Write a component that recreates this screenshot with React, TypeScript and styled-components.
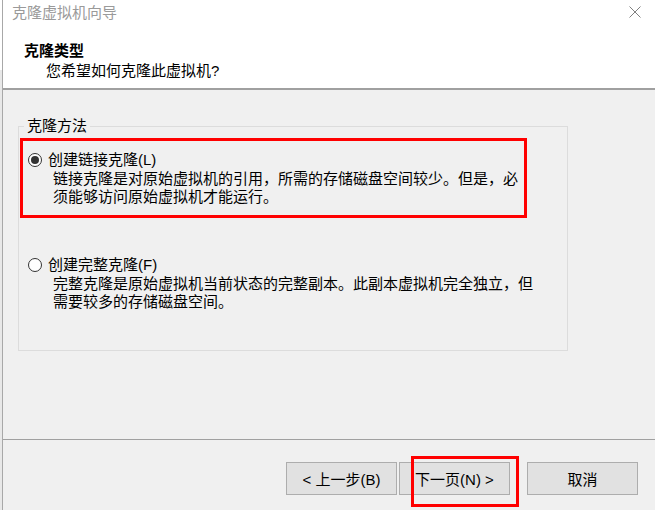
import styled, { createGlobalStyle } from "styled-components"

const GlobalStyle = createGlobalStyle`
html, body {
  margin: 0;
  padding: 0;
  background: #f0f0f0;
}
body {
  font-family: "Liberation Sans", "Noto Sans CJK SC", sans-serif;
  font-size: 15px;
  color: #000;
}
`

const Screen = styled.div`
display: flex;
width: 655px;
height: 510px;
overflow: hidden;
`

const BackStrip = styled.div`
width: 2px;
background: linear-gradient(#fff 0 70px, #e8e8e8 70px);
`

const Window = styled.div`
flex: 1;
display: flex;
flex-direction: column;
border-left: 1px solid #a8a8a8;
background: #f0f0f0;
`

const Header = styled.div`
height: 88px;
background: #fff;
border-bottom: 2px solid #a0a0a0;
`

const TitleBar = styled.div`
height: 30px;
display: flex;
align-items: center;
justify-content: space-between;
padding: 0 14px 0 9px;
`

const Title = styled.span`
color: #9a9a9a;
font-size: 15px;
line-height: 20px;
margin-top: -4px;
`

const CloseIcon = () => (
  <svg width="12" height="12" viewBox="0 0 12 12" style={{ marginTop: -6 }}>
    <path d="M0.5 0.5 L11.5 11.5 M11.5 0.5 L0.5 11.5" stroke="#808080" strokeWidth="1" fill="none" />
  </svg>
)

const HeaderText = styled.div`
padding: 11px 0 0 21px;
line-height: 20px;
`

const Heading = styled.div`
font-weight: bold;
`

const Subtitle = styled.div`
padding-left: 22px;
`

const Body = styled.div`
height: 349px;
padding: 27px 0 0 15px;
box-sizing: border-box;
`

const Group = styled.fieldset`
width: 550px;
box-sizing: border-box;
margin: 0;
padding: 3px 0 39px 0;
border: 1px solid #dcdcdc;
`

const Legend = styled.legend`
margin-left: 5px;
padding: 0 3px;
line-height: 18px;
`

const Highlight = styled.div`
width: 507px;
box-sizing: border-box;
margin-left: 1px;
border: 3px solid #ff0000;
padding: 10px 0 9px 5px;
`

const Option = styled.div<{ $gap?: number; $indent?: number }>`
margin-top: ${props => props.$gap ?? 0}px;
padding-left: ${props => props.$indent ?? 0}px;
`

const OptionRow = styled.label`
display: flex;
align-items: center;
gap: 6px;
line-height: 18px;
`

const Radio = styled.span<{ $checked?: boolean }>`
width: 14px;
height: 14px;
box-sizing: border-box;
border-radius: 50%;
border: 1px solid #333;
background: #fff;
display: flex;
align-items: center;
justify-content: center;

&::after {
  content: "";
  width: 8px;
  height: 8px;
  border-radius: 50%;
  background: ${props => props.$checked ? "#333" : "transparent"};
}
`

const Desc = styled.div`
padding-left: 25px;
margin-top: 1px;
line-height: 18px;
`

const Footer = styled.div`
flex: 1;
position: relative;
border-top: 1px solid #a0a0a0;
display: flex;
justify-content: flex-end;
align-items: flex-start;
padding: 22px 17px 0 0;
`

const Button = styled.button<{ $width: number; $gap?: number }>`
width: ${props => props.$width}px;
height: 33px;
margin-left: ${props => props.$gap ?? 0}px;
background: #e1e1e1;
border: 1px solid #adadad;
font-family: inherit;
font-size: 15px;
color: #000;
padding: 0;
`

const Callout = styled.div`
position: absolute;
left: 408px;
top: 16px;
width: 108px;
height: 51px;
box-sizing: border-box;
border: 3px solid #ff0000;
pointer-events: none;
`

export default function App() {
  return <>
    <GlobalStyle />
    <Screen>
      <BackStrip />
      <Window>
        <Header>
          <TitleBar>
            <Title>克隆虚拟机向导</Title>
            <CloseIcon />
          </TitleBar>
          <HeaderText>
            <Heading>克隆类型</Heading>
            <Subtitle>您希望如何克隆此虚拟机?</Subtitle>
          </HeaderText>
        </Header>
        <Body>
          <Group>
            <Legend>克隆方法</Legend>
            <Highlight>
              <Option>
                <OptionRow><Radio $checked />创建链接克隆(L)</OptionRow>
                <Desc>
                  链接克隆是对原始虚拟机的引用，所需的存储磁盘空间较少。但是，必<br />
                  须能够访问原始虚拟机才能运行。
                </Desc>
              </Option>
            </Highlight>
            <Option $gap={38} $indent={9}>
              <OptionRow><Radio />创建完整克隆(F)</OptionRow>
              <Desc>
                完整克隆是原始虚拟机当前状态的完整副本。此副本虚拟机完全独立，但<br />
                需要较多的存储磁盘空间。
              </Desc>
            </Option>
          </Group>
        </Body>
        <Footer>
          <Button $width={111}>&lt; 上一步(B)</Button>
          <Button $width={111} $gap={2}>下一页(N) &gt;</Button>
          <Button $width={111} $gap={17}>取消</Button>
          <Callout />
        </Footer>
      </Window>
    </Screen>
  </>
}
